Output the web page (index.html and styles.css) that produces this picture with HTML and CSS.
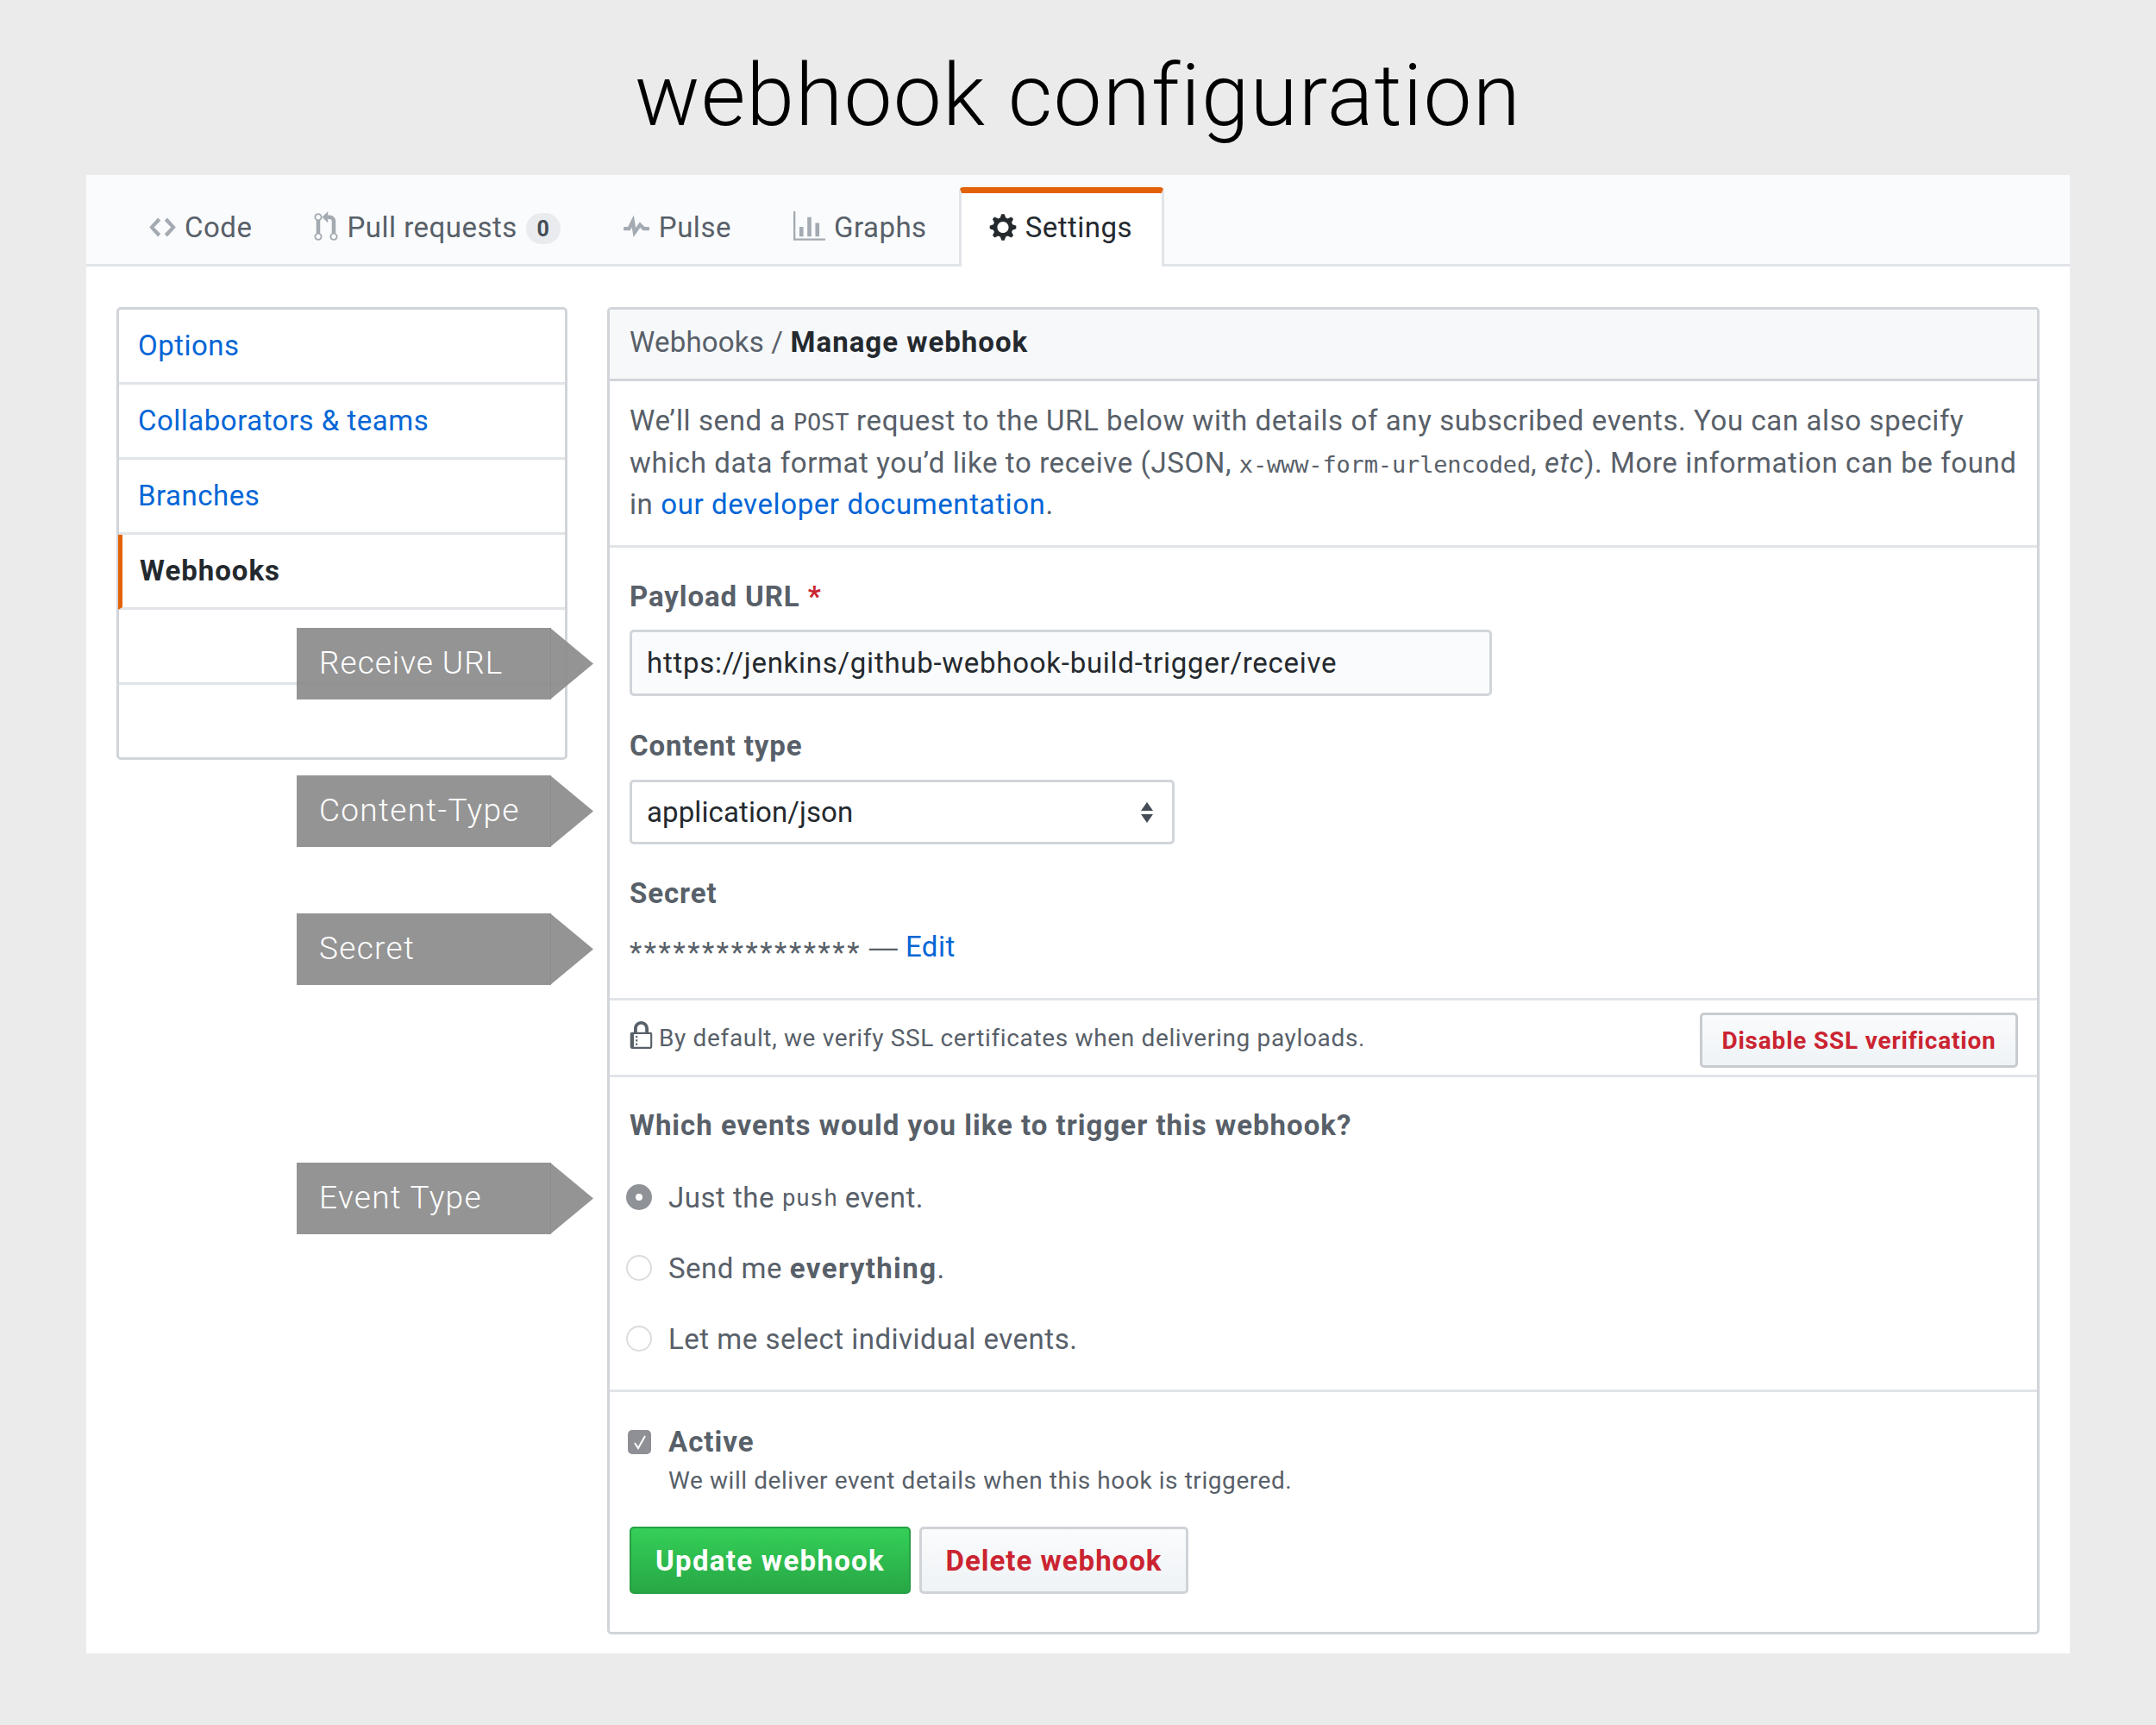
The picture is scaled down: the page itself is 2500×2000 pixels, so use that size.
FILE: index.html
```html
<!DOCTYPE html>
<html lang="en">
<head>
    <meta charset="UTF-8">
    <title>webhook configuration</title>
    <link rel="stylesheet" href="styles.css">
</head>
<body>
    <h1 class="title">webhook configuration</h1>
    <div class="panel">
        <nav class="tabs">
            <a class="tab">
                <svg class="icon" width="31" height="35" viewBox="0 0 14 16"><path d="M9.5 3L8 4.5 11.5 8 8 11.5 9.5 13 14 8 9.5 3zm-5 0L0 8l4.5 5L6 11.5 2.5 8 6 4.5 4.5 3z"/></svg>
                Code
            </a>
            <a class="tab">
                <svg class="icon" width="28" height="36" viewBox="0 0 12 16"><path d="M11 11.28V5c-.03-.78-.34-1.47-.94-2.06C9.46 2.35 8.78 2.03 8 2H7V0L4 3l3 3V4h1c.27.02.48.11.69.31.21.2.3.42.31.69v6.28A1.993 1.993 0 0 0 10 15a1.993 1.993 0 0 0 1-3.72zm-1 2.92c-.66 0-1.2-.55-1.2-1.2 0-.65.55-1.2 1.2-1.2.65 0 1.2.55 1.2 1.2 0 .65-.55 1.2-1.2 1.2zM4 3c0-1.11-.89-2-2-2a1.993 1.993 0 0 0-1 3.72v6.56A1.993 1.993 0 0 0 2 15a1.993 1.993 0 0 0 1-3.72V4.72c.59-.34 1-.98 1-1.72zm-.8 10c0 .66-.55 1.2-1.2 1.2-.65 0-1.2-.55-1.2-1.2 0-.65.55-1.2 1.2-1.2.65 0 1.2.55 1.2 1.2zM2 4.2C1.34 4.2.8 3.65.8 3c0-.65.55-1.2 1.2-1.2.65 0 1.2.55 1.2 1.2 0 .65-.55 1.2-1.2 1.2z"/></svg>
                Pull requests <span class="counter">0</span>
            </a>
            <a class="tab">
                <svg class="icon" width="32" height="34" viewBox="0 0 14 16"><path d="M11.5 8L8.8 5.4 6.6 8.5 5.5 1.6 2.38 8H0v2h3.6l.9-1.8.9 5.4L9 8.5l1.6 1.5H14V8z"/></svg>
                Pulse
            </a>
            <a class="tab">
                <svg class="icon" width="37" height="36" viewBox="0 0 16 16" preserveAspectRatio="none"><path d="M16 14v1H0V0h1v14h15zM5 13H3V8h2v5zm4 0H7V3h2v10zm4 0h-2V6h2v7z"/></svg>
                Graphs
            </a>
            <a class="tab tab-selected">
                <svg class="icon" width="32" height="35" viewBox="0 0 14 16"><path d="M14 8.77v-1.6l-1.94-.64-.45-1.09.88-1.84-1.13-1.13-1.81.91-1.09-.45-.69-1.92h-1.6l-.63 1.94-1.11.45-1.84-.88-1.13 1.13.91 1.81-.45 1.09L0 7.23v1.59l1.94.64.45 1.09-.88 1.84 1.13 1.13 1.81-.91 1.09.45.69 1.92h1.59l.63-1.94 1.11-.45 1.84.88 1.13-1.13-.92-1.81.47-1.09L14 8.75v.02zM7 11c-1.66 0-3-1.34-3-3s1.34-3 3-3 3 1.34 3 3-1.34 3-3 3z"/></svg>
                Settings
            </a>
        </nav>

        <div class="content">
            <aside class="side-menu">
                <a class="menu-item">Options</a>
                <a class="menu-item">Collaborators &amp; teams</a>
                <a class="menu-item">Branches</a>
                <a class="menu-item menu-selected">Webhooks</a>
                <a class="menu-item"></a>
                <a class="menu-item"></a>
            </aside>

            <main class="box">
                <div class="box-header">Webhooks / <strong>Manage webhook</strong></div>

                <p class="intro">We’ll send a <code>POST</code> request to the URL below with details of any subscribed events. You can also specify which data format you’d like to receive (JSON, <code>x-www-form-urlencoded</code>, <em>etc</em>). More information can be found in <a class="link">our developer documentation</a>.</p>

                <section class="fields">
                    <label class="field-label label-url">Payload URL <span class="required">*</span></label>
                    <div class="input input-url">https://jenkins/github-webhook-build-trigger/receive</div>

                    <label class="field-label label-type">Content type</label>
                    <div class="input input-select">
                        application/json
                        <svg class="select-arrows" width="16" height="24" viewBox="0 0 16 24"><path d="M8 0l7 10H1zM8 24L1 14h14z"/></svg>
                    </div>

                    <label class="field-label label-secret">Secret</label>
                    <div class="secret"><span class="stars">****************</span> <span class="dash">—</span> <a class="link">Edit</a></div>
                </section>

                <section class="ssl-row">
                    <svg class="lock" width="27" height="34" viewBox="0 0 12 16"><path d="M4 13H3v-1h1v1zm8-6v7c0 .55-.45 1-1 1H1c-.55 0-1-.45-1-1V7c0-.55.45-1 1-1h1V4c0-2.2 1.8-4 4-4s4 1.8 4 4v2h1c.55 0 1 .45 1 1zM3.8 6h4.41V4c0-1.22-.98-2.2-2.2-2.2-1.22 0-2.2.98-2.2 2.2v2H3.8zM11 7H2v7h9V7zM4 8H3v1h1V8zm0 2H3v1h1v-1z"/></svg>
                    <span class="ssl-text">By default, we verify SSL certificates when delivering payloads.</span>
                    <button class="btn btn-ssl">Disable SSL verification</button>
                </section>

                <section class="events">
                    <h3 class="events-title">Which events would you like to trigger this webhook?</h3>
                    <div class="radio-row"><span class="radio radio-on"></span>Just the <code class="push">push</code> event.</div>
                    <div class="radio-row"><span class="radio"></span>Send me <strong class="everything">everything</strong>.</div>
                    <div class="radio-row"><span class="radio"></span>Let me select individual events.</div>
                </section>

                <section class="active">
                    <div class="active-row">
                        <span class="checkbox"><svg width="16" height="18" viewBox="0 0 16 18"><path d="M2 10l4 6 8-14" fill="none" stroke="#fff" stroke-width="2"/></svg></span>
                        Active
                    </div>
                    <p class="active-note">We will deliver event details when this hook is triggered.</p>
                    <div class="actions">
                        <button class="btn btn-update">Update webhook</button>
                        <button class="btn btn-delete">Delete webhook</button>
                    </div>
                </section>
            </main>
        </div>

        <div class="callout callout-url">Receive URL</div>
        <div class="callout callout-type">Content-Type</div>
        <div class="callout callout-secret">Secret</div>
        <div class="callout callout-event">Event Type</div>
    </div>
</body>
</html>
```

FILE: styles.css
```css
* {
    box-sizing: border-box;
}
body {
    margin: 0;
    height: 2000px;
    background: #ebebeb;
    font-family: Roboto, "Liberation Sans", sans-serif;
    font-size: 33px;
    letter-spacing: 0.5px;
    color: #24292e;
}
strong {
    letter-spacing: 1px;
}
.title {
    margin: 0;
    height: 203px;
    padding-top: 46px;
    text-align: center;
    font-size: 100px;
    font-weight: 300;
    line-height: 130px;
    letter-spacing: 1.2px;
    color: #000;
}
.panel {
    position: relative;
    margin: 0 100px;
    height: 1714px;
    background: #fff;
}

/* tabs */
.tabs {
    display: flex;
    height: 106px;
    padding: 14px 0 0 37px;
    background: #fafbfc;
    border-bottom: 3px solid #e1e4e8;
}
.tab {
    display: flex;
    align-items: center;
    gap: 10px;
    height: 92px;
    padding: 0 36px;
    color: #586069;
}
.tab .icon {
    fill: #a3aab1;
}
.counter {
    display: inline-block;
    width: 40px;
    height: 36px;
    margin-top: 4px;
    border-radius: 20px;
    background: #e9ebee;
    color: #444d56;
    font-size: 25px;
    font-weight: 700;
    line-height: 38px;
    text-align: center;
}
.tab-selected {
    width: 238px;
    margin-left: 1px;
    padding: 0 0 7px 32px;
    background: #fff;
    color: #24292e;
    border: solid #e1e4e8;
    border-width: 7px 3px 0;
    border-top-color: #e36209;
    border-radius: 5px 5px 0 0;
}
.tab-selected .icon {
    fill: #24292e;
}

.content {
    display: flex;
    align-items: flex-start;
    padding: 47px 35px 0;
    gap: 46px;
}

/* side menu */
.side-menu {
    flex: none;
    width: 523px;
    border: 3px solid #d1d5da;
    border-radius: 5px;
}
.menu-item {
    display: block;
    height: 87px;
    padding: 0 22px;
    color: #0366d6;
    line-height: 84px;
    border-bottom: 3px solid #e1e4e8;
}
.menu-item:last-child {
    height: 84px;
    border-bottom: 0;
}
.menu-selected {
    border-left: 5px solid #e36209;
    padding-left: 20px;
    margin-left: -1px;
    color: #24292e;
    font-weight: 700;
    letter-spacing: 1px;
}

/* main box */
.box {
    flex: 1;
    height: 1539px;
    border: 3px solid #d1d5da;
    border-radius: 5px;
}
.box-header {
    height: 83px;
    padding: 0 23px;
    background: #f6f8fa;
    border-bottom: 3px solid #d1d5da;
    color: #586069;
    line-height: 76px;
    letter-spacing: 0.2px;
}
.box-header strong {
    color: #24292e;
}
.intro {
    margin: 0;
    height: 193px;
    padding: 22px 23px 0;
    border-bottom: 3px solid #e1e4e8;
    color: #586069;
    line-height: 48.5px;
    letter-spacing: 0.6px;
}
code {
    font-family: "DejaVu Sans Mono", monospace;
    font-size: 27px;
    line-height: 1;
    letter-spacing: -0.15px;
}
.link {
    color: #0366d6;
}
.fields {
    height: 525px;
    padding: 35px 23px 0;
    border-bottom: 3px solid #e1e4e8;
}
.field-label {
    display: block;
    color: #586069;
    font-weight: 700;
    line-height: 44px;
    letter-spacing: 0.9px;
}
.label-url {
    margin-bottom: 16px;
}
.label-type {
    margin: 36px 0 17px;
}
.label-secret {
    margin-top: 35px;
}
.required {
    color: #cb2431;
}
.input {
    display: flex;
    align-items: center;
    padding: 0 17px;
    border: 3px solid #d1d5da;
    border-radius: 5px;
    color: #24292e;
}
.input-url {
    width: 1000px;
    height: 77px;
    background: #fafbfc;
    letter-spacing: 0.73px;
}
.input-select {
    justify-content: space-between;
    width: 632px;
    height: 75px;
    padding-right: 21px;
    background: #fff;
    letter-spacing: 0.1px;
}
.select-arrows {
    fill: #444d56;
}
.secret {
    margin-top: 16px;
    color: #586069;
    line-height: 48px;
}
.stars {
    letter-spacing: 2.6px;
    vertical-align: -7px;
}
.dash {
    font-family: "Liberation Sans", sans-serif;
}
.ssl-row {
    display: flex;
    align-items: center;
    height: 89px;
    padding: 0 23px;
    border-bottom: 3px solid #e1e4e8;
    color: #586069;
    font-size: 28px;
    letter-spacing: 0.65px;
}
.lock {
    flex: none;
    margin: -4px 7px 0 0;
    fill: #586069;
}
.ssl-text {
    flex: 1;
}
.btn {
    font-family: inherit;
    font-weight: 700;
    border-radius: 5px;
    padding: 0;
}
.btn-ssl {
    width: 369px;
    height: 64px;
    margin: 6px -1px 0 0;
    border: 3px solid #c8ccd1;
    background: linear-gradient(#fafbfc, #eff3f6);
    color: #cb2431;
    font-size: 28px;
    letter-spacing: 0.8px;
}
.events {
    height: 365px;
    padding: 32px 23px 0;
    border-bottom: 3px solid #e1e4e8;
    color: #586069;
}
.events-title {
    margin: 0 0 18px;
    font-size: 33px;
    font-weight: 700;
    line-height: 48px;
    letter-spacing: 1px;
}
.radio-row {
    display: flex;
    align-items: center;
    height: 82px;
    white-space: pre;
}
.radio {
    flex: none;
    width: 30px;
    height: 30px;
    margin: 0 19px 0 -4px;
    border-radius: 50%;
    border: 2px solid #dcdcdc;
    background: #fff;
}
.radio-on {
    border: 11px solid #8f9296;
}
.everything {
    letter-spacing: 1.4px;
}
.active {
    padding: 36px 23px 0;
    color: #586069;
}
.active-row {
    display: flex;
    align-items: center;
    gap: 20px;
    font-weight: 700;
    line-height: 44px;
    letter-spacing: 1px;
}
.checkbox {
    display: flex;
    align-items: center;
    justify-content: center;
    width: 27px;
    height: 28px;
    margin-left: -2px;
    border-radius: 5px;
    background: #8e9095;
}
.active-note {
    margin: 1px 0 0 45px;
    font-size: 28px;
    line-height: 44px;
    letter-spacing: 0.57px;
}
.actions {
    display: flex;
    gap: 10px;
    margin-top: 31px;
}
.btn-update, .btn-delete {
    height: 78px;
    font-size: 33px;
}
.btn-update {
    width: 326px;
    border: 2px solid #279f43;
    background: linear-gradient(#34d058, #28a745);
    color: #fff;
    letter-spacing: 1.3px;
}
.btn-delete {
    width: 312px;
    border: 3px solid #cfd3d8;
    background: linear-gradient(#fafbfc, #eff3f6);
    color: #cb2431;
    letter-spacing: 1px;
}

/* grey arrows over the form */
.callout {
    position: absolute;
    left: 244px;
    width: 295px;
    height: 83px;
    padding-left: 26px;
    background: rgba(140, 140, 140, 0.93);
    color: #fff;
    font-size: 37px;
    font-weight: 300;
    line-height: 81px;
    letter-spacing: 1.3px;
}
.callout::after {
    content: "";
    position: absolute;
    left: calc(100% - 1px);
    top: 0;
    width: 50px;
    height: 83px;
    background: rgba(140, 140, 140, 0.93);
    clip-path: polygon(0 0, 100% 50%, 0 100%);
}
.callout-url {
    top: 525px;
    letter-spacing: 1px;
}
.callout-type {
    top: 696px;
}
.callout-secret {
    top: 856px;
}
.callout-event {
    top: 1145px;
}
```
